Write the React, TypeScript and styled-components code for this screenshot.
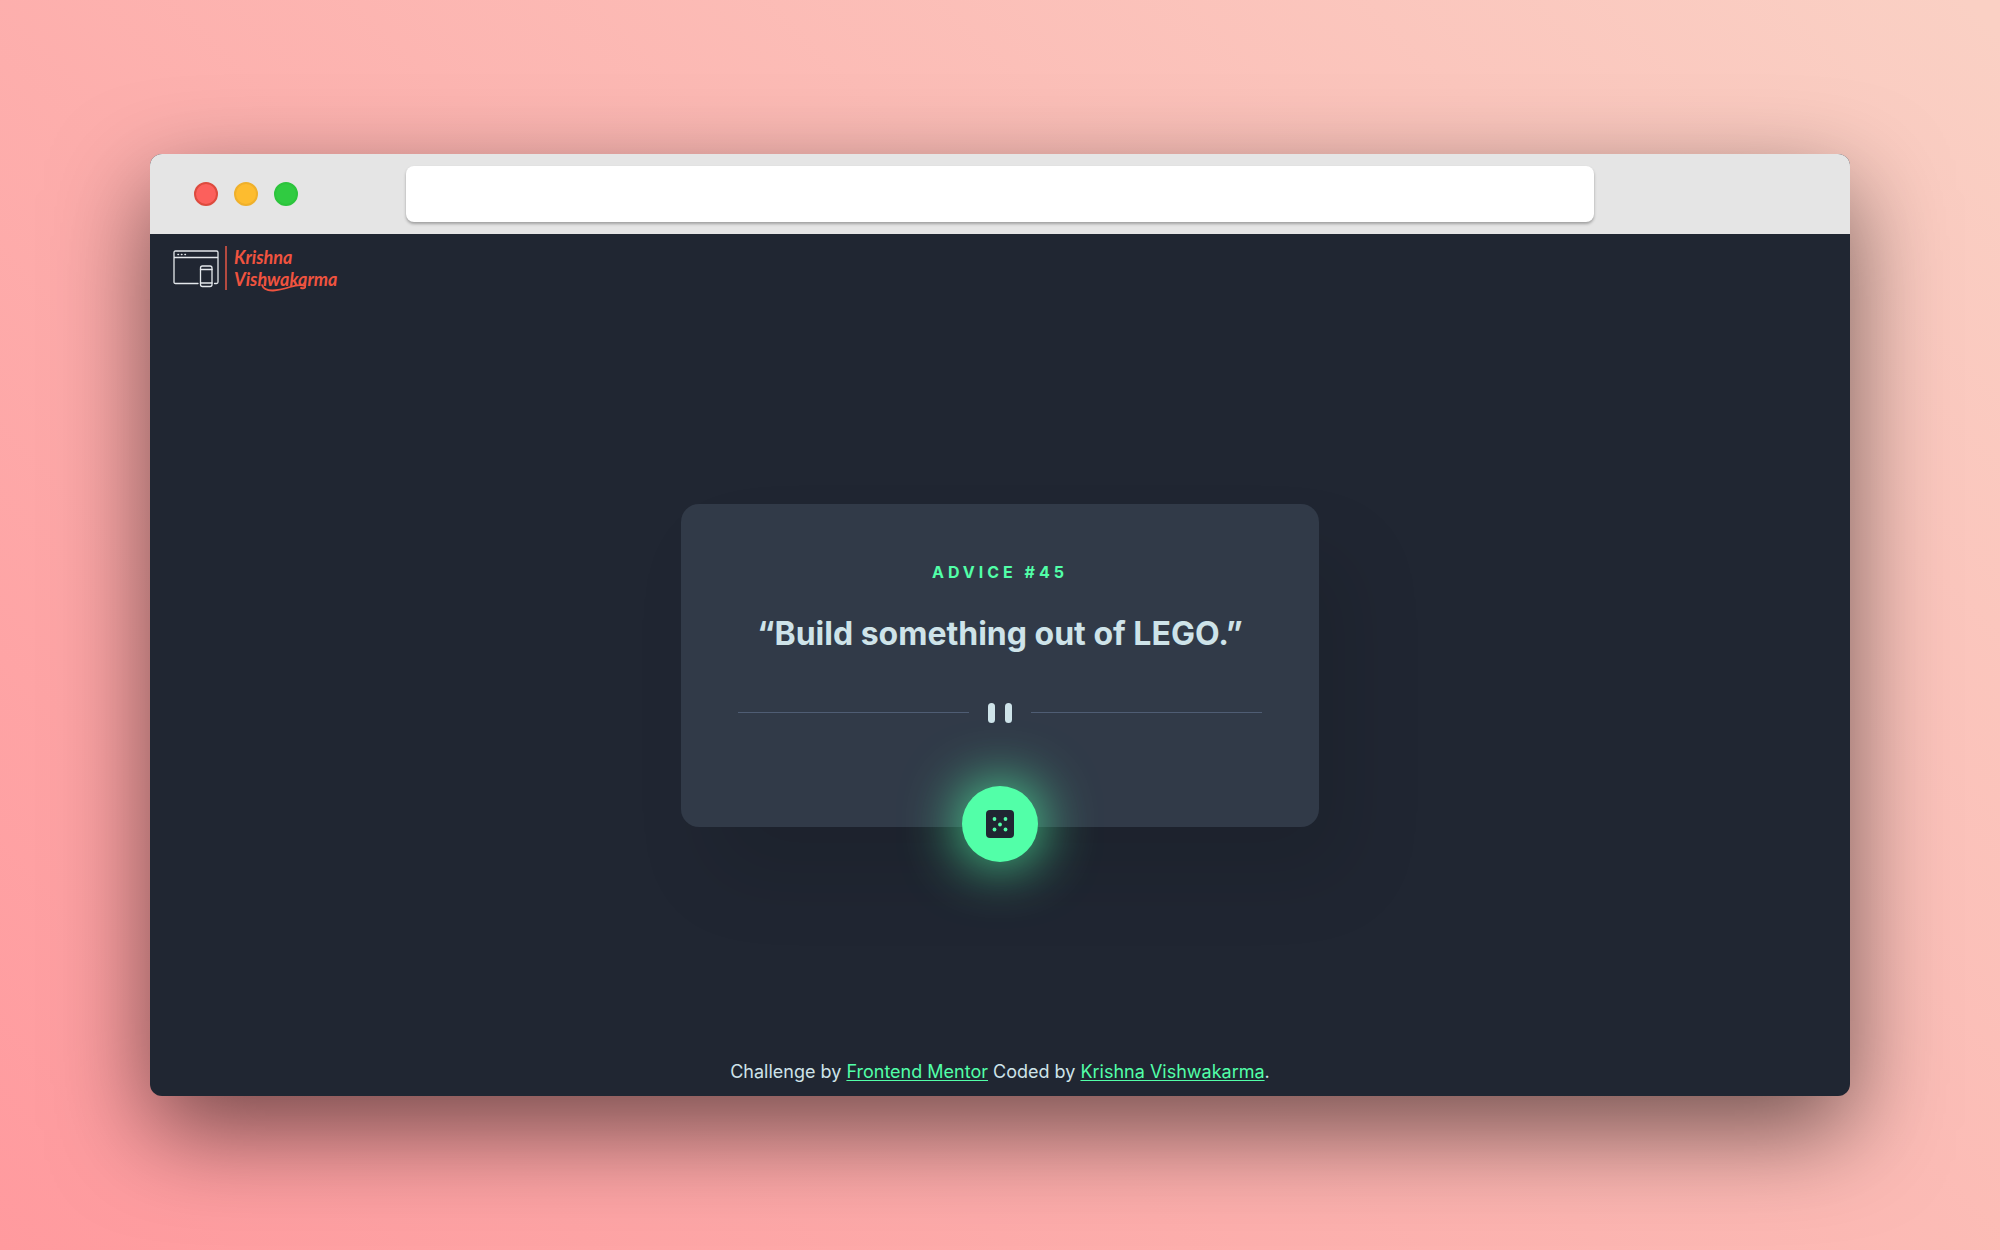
import React from "react";
import styled, { createGlobalStyle } from "styled-components";

const colors = {
  night: "#202632",
  card: "#313a48",
  line: "#4f5d74",
  cyan: "#cee3e9",
  green: "#52ffa8",
  coral: "#f0533f",
};

const GlobalStyle = createGlobalStyle`
  * { box-sizing: border-box; }
  body {
    margin: 0;
    font-family: Inter, "Noto Sans", sans-serif;
    color: ${colors.cyan};
  }
`;

const Page = styled.div`
  min-height: 100vh;
  padding: 154px 150px;
  display: flex;
  background: linear-gradient(45deg, #ff9a9e 0%, #fad0c4 99%);
`;

const BrowserWindow = styled.div`
  flex: 1;
  display: flex;
  flex-direction: column;
  border-radius: 12px;
  background: ${colors.night};
  box-shadow: 0 35px 96px rgba(0, 0, 0, 0.55);
`;

const TitleBar = styled.div`
  display: grid;
  grid-template-columns: 256px 1fr 256px;
  align-items: center;
  height: 80px;
  border-radius: 12px 12px 0 0;
  background: #e5e5e5;
`;

const Lights = styled.div`
  display: flex;
  gap: 16px;
  padding-left: 44px;
`;

const Light = styled.button<{ $fill: string; $edge: string }>`
  width: 24px;
  height: 24px;
  padding: 0;
  border: 2px solid ${(p) => p.$edge};
  border-radius: 50%;
  background: ${(p) => p.$fill};
`;

const AddressBar = styled.input`
  width: 100%;
  height: 56px;
  padding: 0 16px;
  border: 0;
  border-radius: 8px;
  background: #fff;
  font: 20px Inter, sans-serif;
  box-shadow: 0 2px 3px rgba(0, 0, 0, 0.3);
`;

const Site = styled.div`
  flex: 1;
  display: grid;
  grid-template-rows: 1fr auto 1fr;
  justify-items: center;
`;

const Header = styled.header`
  justify-self: stretch;
  padding: 12px 23px;
`;

const Logo = styled.a`
  display: inline-flex;
  color: ${colors.coral};
  text-decoration: none;
`;

const DevicesIcon = styled.svg`
  width: 46px;
  height: 38px;
  margin-top: 4px;
`;

const LogoName = styled.span`
  position: relative;
  display: flex;
  flex-direction: column;
  margin-left: 6px;
  padding-left: 7px;
  border-left: 2px solid #b34a40;
  font: italic 700 18px/22px Lato, sans-serif;
`;

const Swash = styled.svg`
  position: absolute;
  left: 34px;
  top: 36px;
  width: 46px;
  height: 10px;
`;

const Card = styled.main`
  display: flex;
  flex-direction: column;
  align-items: center;
  width: 638px;
  max-width: 100%;
  padding: 56px 57px 0;
  border-radius: 18px;
  background: ${colors.card};
  box-shadow: 30px 50px 80px rgba(0, 0, 0, 0.1);
`;

const AdviceNumber = styled.h1`
  margin: 0;
  color: ${colors.green};
  font-size: 16px;
  font-weight: 700;
  line-height: 24px;
  letter-spacing: 4px;
`;

const Quote = styled.p`
  margin: 28px 0 0;
  font-size: 32px;
  font-weight: 700;
  line-height: 44px;
  text-align: center;
`;

const Divider = styled.div`
  align-self: stretch;
  display: flex;
  align-items: center;
  gap: 10px;
  margin-top: 47px;
`;

const Rule = styled.hr`
  flex: 1;
  height: 1px;
  margin: 0;
  border: 0;
  background: ${colors.line};
`;

const PauseMark = styled.span`
  display: flex;
  justify-content: center;
  gap: 10px;
  width: 42px;
`;

const PauseBar = styled.span`
  width: 7px;
  height: 20px;
  border-radius: 4px;
  background: ${colors.cyan};
`;

const DiceButton = styled.button`
  display: grid;
  place-items: center;
  width: 76px;
  height: 76px;
  margin: 63px 0 -35px;
  padding: 0;
  border: 0;
  border-radius: 50%;
  background: ${colors.green};
  box-shadow: 0 0 60px ${colors.green};
`;

const Footer = styled.footer`
  align-self: end;
  padding-bottom: 10px;
  font-size: 18px;
  line-height: 28px;
`;

const FooterLink = styled.a`
  color: ${colors.green};
  text-underline-offset: 2px;
`;

const pips = [
  [8.5, 9],
  [19.5, 9],
  [14, 14.5],
  [8.5, 19.5],
  [19.5, 19.5],
];

export default function App() {
  return (
    <>
      <GlobalStyle />
      <Page>
        <BrowserWindow>
          <TitleBar>
            <Lights>
              <Light $fill="#fc605c" $edge="#dd4b3e" aria-label="Close" />
              <Light $fill="#fdbc2f" $edge="#efb02b" aria-label="Minimize" />
              <Light $fill="#30cb41" $edge="#2cc43c" aria-label="Maximize" />
            </Lights>
            <AddressBar type="text" aria-label="Address" />
          </TitleBar>
          <Site>
            <Header>
              <Logo href="#">
                <DevicesIcon viewBox="0 0 46 38" fill="none" stroke="#e4e8ec" strokeWidth="1.3" strokeLinecap="round">
                  <path d="M25 33.5H2.5Q1 33.5 1 32V2.5Q1 1 2.5 1H43.5Q45 1 45 2.5V32Q45 33.5 43.5 33.5H41.5M1 7.5H45" />
                  <path d="M5 4.5h.4M8.5 4.5h.4M12 4.5h.4" strokeWidth="1.6" />
                  <rect x="27.5" y="16" width="11.5" height="20.5" rx="2" />
                  <path d="M27.5 19.5H39M27.5 33H39" />
                </DevicesIcon>
                <LogoName>
                  <span>Krishna</span>
                  <span>Vishwakarma</span>
                  <Swash viewBox="0 0 46 10" fill="none" stroke="currentColor" strokeWidth="1.8" strokeLinecap="round">
                    <path d="M1 3C4 12 19 8 29 5Q39 2 44 4Q45 7 40 6" />
                  </Swash>
                </LogoName>
              </Logo>
            </Header>
            <Card>
              <AdviceNumber>ADVICE #45</AdviceNumber>
              <Quote>“Build something out of LEGO.”</Quote>
              <Divider>
                <Rule />
                <PauseMark>
                  <PauseBar />
                  <PauseBar />
                </PauseMark>
                <Rule />
              </Divider>
              <DiceButton aria-label="New advice">
                <svg width="28" height="28" viewBox="0 0 28 28">
                  <rect width="28" height="28" rx="4" fill={colors.night} />
                  {pips.map(([x, y]) => (
                    <circle key={`${x}-${y}`} cx={x} cy={y} r="1.9" fill={colors.green} />
                  ))}
                </svg>
              </DiceButton>
            </Card>
            <Footer>
              Challenge by <FooterLink href="#">Frontend Mentor</FooterLink> Coded by{" "}
              <FooterLink href="#">Krishna Vishwakarma</FooterLink>.
            </Footer>
          </Site>
        </BrowserWindow>
      </Page>
    </>
  );
}
